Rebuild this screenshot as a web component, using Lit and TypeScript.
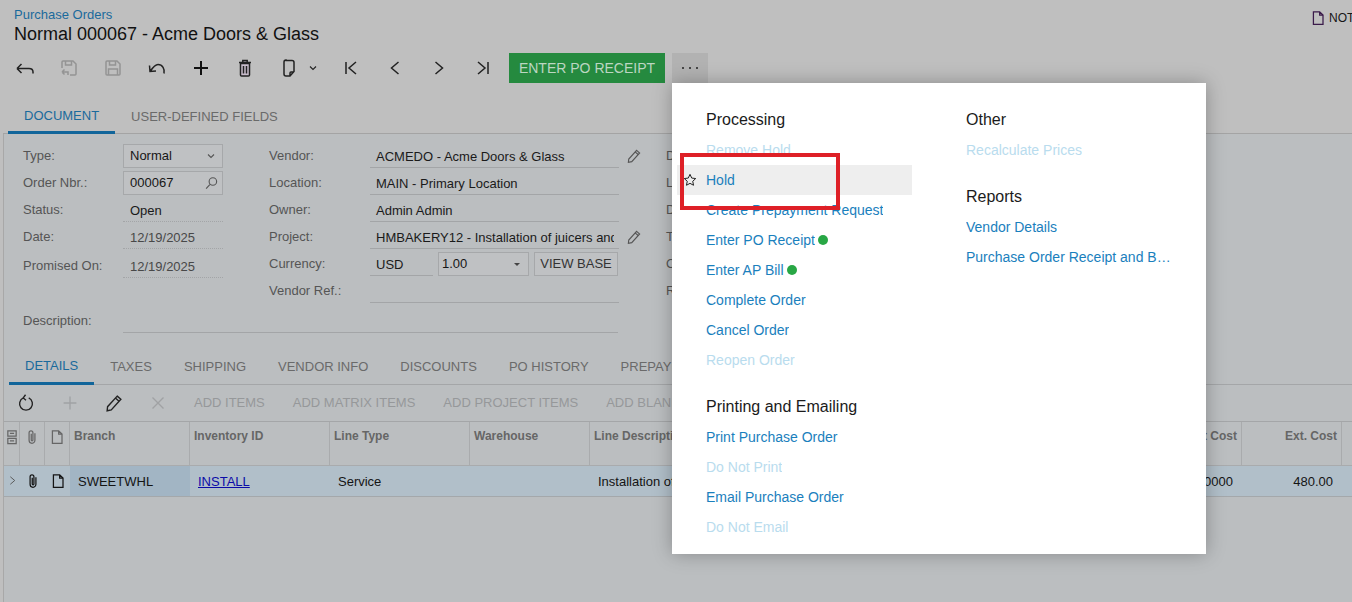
import { LitElement, html, css } from "lit";
import { customElement } from "lit/decorators.js";

const I: Record<string, string> = {
  back: "M4 12.5h12c2.5 0 4 1.5 4 3.5v1.5M4 12.5l4.5-4.5M4 12.5l4.5 4.5",
  saveBack: "M5 12V6a1 1 0 0 1 1-1h10l3 3v10a1 1 0 0 1-1 1h-5M8.5 5v4h6V5M5 16h6v3M5 16l2.5-2.5M5 16l2.5 2.5",
  save: "M5 6a1 1 0 0 1 1-1h10l3 3v10a1 1 0 0 1-1 1H6a1 1 0 0 1-1-1zM8.5 5v4h6V5M7.5 19v-6h9v6",
  undo: "M19 17.5c1-4.5-1.5-9-6-9-2.5 0-4.5 2-7.5 6.5M4.5 9.5l.5 6 6-.5",
  plus: "M5 12h14M12 5v14",
  trash: "M7.5 7.5h9v11.500a1 1 0 0 1-1 1h-7a1 1 0 0 1-1-1zM6 6.500h12M9.800 6.500V4.500h4.400v2M10.500 10v7.500M13.500 10v7.500",
  copy: "M9 4.500h6a2 2 0 0 1 2 2v9l-4 4.500H9a2 2 0 0 1-2-2v-12a2 2 0 0 1 2-2zM13 20v-3a1 1 0 0 1 1-1h3",
  chevD: "M8 10l4 4 4-4",
  first: "M7 6v12M17 6l-7 6 7 6",
  prev: "M15.500 6l-7 6 7 6",
  next: "M8.500 6l7 6-7 6",
  last: "M7 6l7 6-7 6M17 6v12",
  refresh: "M9 6.500a7 7 0 1 0 6 0M11.500 3l-2.500 3.500 3 2.500",
  x: "M6 6l12 12M18 6L6 18",
  pencil: "M15.500 4.500l4 3.500L9 19.500l-4.500 1 .5-4.500zM13.500 6.500l4 3.500",
  search: "M14.500 5a5 5 0 1 1 0 10 5 5 0 0 1 0-10zM11 13.500L5.500 19.500",
  clip: "M15.500 7.500v8.500a3.500 3.500 0 0 1-7 0V7a2.300 2.300 0 0 1 4.600 0v8.500a1 1 0 0 1-2 0V8",
  page: "M6.500 4.500h7.500l4 4v11H6.500zM14 4.500v4h4",
  files: "M7 4.500h10v6.500H7zM7 13.500h10v6.500H7zM9.500 7.700h5M9.500 16.700h5M7 11h10",
  star: "M12 3.500l2.600 5.600 6 .7-4.500 4.100 1.200 6L12 17l-5.300 2.900 1.200-6-4.500-4.100 6-.7z",
};

const icon = (name: string, cls = "") =>
  html`<svg class="ic ${cls}" viewBox="0 0 24 24" aria-hidden="true"><path d=${I[name]}></path></svg>`;

@customElement("app-root")
export class AppRoot extends LitElement {
  static styles = css`
    :host { display: block; position: relative; width: 1352px; height: 602px; overflow: hidden; background: #bfbfbf; color: #161616; font: 13px/16px "Liberation Sans", Arial, sans-serif; }
    * { box-sizing: border-box; }
    .ic { width: 24px; height: 24px; fill: none; stroke: currentColor; stroke-width: 1.5; display: block; flex: none; }

    .top { display: flex; padding-top: 7px; height: 46px; }
    .crumbs { width: 1312px; padding-left: 14px; flex: none; }
    .crumb { color: #1a6a9c; font-size: 13px; line-height: 16px; }
    .title { font-size: 18px; line-height: 23px; color: #111; }
    .notes { display: flex; align-items: center; gap: 1px; font-size: 12px; height: 16px; margin-top: 3px; white-space: nowrap; }
    .notes .ic { width: 20px; height: 20px; margin-left: -4px; color: #3a1a4a; }

    .bar { display: flex; align-items: center; height: 30px; margin-top: 7px; padding-left: 3px; }
    .tb { width: 44px; height: 30px; display: flex; align-items: center; justify-content: center; color: #222; flex: none; }
    .tb.off { color: #949494; }
    .tb.wide { width: 62px; justify-content: flex-start; padding-left: 10px; }
    .tb.wide .ic:last-child { width: 18px; height: 18px; margin-left: 3px; }
    .tb.bold .ic { stroke-width: 2; color: #111; }
    .tb.trash .ic path { fill: #c8bccb; }
    .go { margin-left: 4px; width: 156px; height: 30px; background: #258a3f; color: #bcd6c2; display: flex; align-items: center; justify-content: center; font-size: 14px; flex: none; }
    .more { margin-left: 7px; width: 36px; height: 30px; background: #b2b2b2; display: flex; align-items: center; justify-content: center; gap: 5px; flex: none; }
    .more i { width: 2px; height: 2px; background: #222; border-radius: 50%; }

    .tabs { display: flex; margin-top: 17px; height: 34px; margin-left: 3px; padding-left: 5px; border-bottom: 1px solid #a4a4a4; }
    .tabs .tab { padding-top: 7px; }
    .tab { padding: 6px 16px 0; font-size: 13px; line-height: 20px; color: #6a6a6a; white-space: nowrap; }
    .tabs .tab.on { color: #1a6a9c; border-bottom: 3px solid #11659a; height: 34px; padding-top: 6px; }

    .body { margin-left: 3px; border-left: 1px solid #a8a8a8; background: #bbbec0; }
    .form { display: flex; height: 216px; padding-top: 10px; padding-left: 19px; }
    .lab { color: #555; width: 100px; flex: none; }
    .r { display: flex; align-items: center; height: 24px; margin-bottom: 3px; white-space: nowrap; }
    .c1 { width: 246px; flex: none; }
    .c2 { width: 397px; flex: none; }
    .c3 { flex: none; }
    .c2 .lab { width: 101px; }
    .c2 .val { width: 249px; }
    .val { height: 24px; display: flex; align-items: center; padding-left: 6px; border-bottom: 1px solid #a3a5a7; overflow: hidden; white-space: nowrap; color: #1a1a1a; padding-top: 2px; }
    .c1 .val { width: 100px; padding-left: 7px; }
    .val.dotted { border-bottom: 1px dotted #a3a5a7; }
    .val.date { color: #484848; }
    .cut { display: block; width: 238px; overflow: hidden; }
    .box { height: 24px; border: 1px solid #a6a8aa; display: flex; align-items: center; justify-content: space-between; padding: 0 2px 0 6px; background: #bfc1c3; flex: none; }
    .c1 .box { width: 100px; }
    .box .ic { width: 18px; height: 18px; color: #555; }
    .promised { margin-top: 5px; }
    .pen { width: 18px; height: 18px; color: #555; margin-left: 6px; }
    .c2 .usd.val { width: 63px; }
    .rate { width: 91px; margin-left: 5px; padding: 0 6px 0 3px; }
    .caret { width: 0; height: 0; border-left: 3px solid transparent; border-right: 3px solid transparent; border-top: 3px solid #444; margin-right: 2px; }
    .vb { width: 84px; margin-left: 5px; justify-content: center; padding: 0; color: #333; }
    .descr { display: flex; align-items: center; height: 24px; margin-top: 3px; }
    .descr .lab { width: 100px; }
    .descr .val { width: 495px; }
    .col-wrap { display: flex; }
    .left { width: 643px; flex: none; }

    .tabs2 { display: flex; height: 35px; margin-left: 5px; border-bottom: 1px solid #a4a6a8; }
    .tabs2 .tab { padding-top: 7px; }
    .tabs2 .tab.on { color: #1a6a9c; border-bottom: 3px solid #11659a; height: 35px; padding-top: 6px; }

    .gbar { display: flex; align-items: center; height: 37px; border-bottom: 1px solid #a4a6a8; padding-bottom: 1px; }
    .gbar .tb .ic { width: 22px; height: 22px; }
    .gbar .tb.off { color: #a0a2a4; }
    .gtxt { padding: 0 14px; color: #96989a; font-size: 13px; white-space: nowrap; }

    .row { display: flex; white-space: nowrap; }
    .row.head { height: 44px; border-bottom: 1px solid #a9abad; color: #666; font: bold 12px/16px "Liberation Sans", sans-serif; }
    .row.data { height: 31px; background: #b1bfc9; border-bottom: 1px solid #a4a8ab; color: #141414; }
    .cell { flex: none; padding: 6px 4px 0; border-right: 1px solid #a9abad; overflow: hidden; }
    .data .cell { border-right: none; padding: 8px 8px 0; }
    .row .k0, .row .k1, .row .k2 { padding: 0; display: flex; align-items: flex-start; justify-content: center; }
    .k0 { width: 16px; }
    .k1, .k2 { width: 25px; }
    .cell .ic { width: 20px; height: 20px; margin-top: 5px; flex: none; }
    .head .k0 .ic, .head .k1 .ic { color: #666; }
    .data .k0 .ic { width: 15px; height: 15px; margin-top: 7px; color: #555; }
    .k3 { width: 120px; }
    .k4 { width: 140px; }
    .k5 { width: 140px; }
    .k6 { width: 120px; }
    .k7 { width: 552px; }
    .k8, .k9 { width: 100px; text-align: right; }
    .data .k3 { background: #a2b5c4; }
    .data .k8, .data .k9 { padding-right: 9px; }
    a { color: #0b0ba8; text-decoration: underline; }
    .spacer { height: 106px; }

    .menu { position: absolute; left: 672px; top: 83px; width: 534px; height: 471px; background: #fff; box-shadow: 0 0 18px rgba(0, 0, 0, 0.28); padding: 20px 34px 0 5px; display: grid; grid-template-columns: 235px 235px; column-gap: 25px; font-size: 14px; line-height: 30px; }
    .mh { height: 32px; font-size: 16px; line-height: 34px; color: #1b1b1b; padding-left: 29px; }
    .mh.next { margin-top: 15px; }
    .mi { height: 30px; padding-left: 29px; color: #1a80bd; display: flex; align-items: center; gap: 3px; white-space: nowrap; position: relative; }
    .mi.off { color: #b9dcee; }
    .mi.on { background: #eeeeee; }
    .mi .star { position: absolute; left: 5px; top: 7px; width: 16px; height: 16px; color: #222; }
    .mi .txt { overflow: hidden; text-overflow: ellipsis; }
    .dot { width: 10px; height: 10px; border-radius: 50%; background: #28a745; flex: none; }
    .mark { position: absolute; left: 680px; top: 153px; width: 160px; height: 57px; border: 4px solid #de2027; }
  `;

  private mi(t: string, opts: { off?: boolean; on?: boolean; dot?: boolean } = {}) {
    return html`<div class="mi ${opts.off ? "off" : ""} ${opts.on ? "on" : ""}">
      ${opts.on ? icon("star", "star") : ""}<span class="txt">${t}</span>${opts.dot ? html`<span class="dot"></span>` : ""}
    </div>`;
  }

  render() {
    return html`
      <div class="top">
        <div class="crumbs">
          <div class="crumb">Purchase Orders</div>
          <div class="title">Normal 000067 - Acme Doors &amp; Glass</div>
        </div>
        <div class="notes">${icon("page")}<span>NOTES</span></div>
      </div>

      <div class="bar">
        <div class="tb">${icon("back")}</div>
        <div class="tb off">${icon("saveBack")}</div>
        <div class="tb off">${icon("save")}</div>
        <div class="tb">${icon("undo")}</div>
        <div class="tb bold">${icon("plus")}</div>
        <div class="tb trash">${icon("trash")}</div>
        <div class="tb wide">${icon("copy")}${icon("chevD")}</div>
        <div class="tb">${icon("first")}</div>
        <div class="tb">${icon("prev")}</div>
        <div class="tb">${icon("next")}</div>
        <div class="tb">${icon("last")}</div>
        <div class="go">ENTER PO RECEIPT</div>
        <div class="more"><i></i><i></i><i></i></div>
      </div>

      <div class="tabs">
        <div class="tab on">DOCUMENT</div>
        <div class="tab">USER-DEFINED FIELDS</div>
      </div>

      <div class="body">
        <div class="form">
          <div class="left">
            <div class="col-wrap">
              <div class="c1">
                <div class="r"><span class="lab">Type:</span><div class="box">Normal ${icon("chevD")}</div></div>
                <div class="r"><span class="lab">Order Nbr.:</span><div class="box">000067 ${icon("search")}</div></div>
                <div class="r"><span class="lab">Status:</span><div class="val dotted">Open</div></div>
                <div class="r"><span class="lab">Date:</span><div class="val dotted date">12/19/2025</div></div>
                <div class="r promised"><span class="lab">Promised On:</span><div class="val dotted date">12/19/2025</div></div>
              </div>
              <div class="c2">
                <div class="r"><span class="lab">Vendor:</span><div class="val">ACMEDO - Acme Doors &amp; Glass</div>${icon("pencil", "pen")}</div>
                <div class="r"><span class="lab">Location:</span><div class="val">MAIN - Primary Location</div></div>
                <div class="r"><span class="lab">Owner:</span><div class="val">Admin Admin</div></div>
                <div class="r"><span class="lab">Project:</span><div class="val"><span class="cut">HMBAKERY12 - Installation of juicers and</span></div>${icon("pencil", "pen")}</div>
                <div class="r"><span class="lab">Currency:</span><div class="val usd">USD</div><div class="box rate">1.00<span class="caret"></span></div><div class="box vb">VIEW BASE</div></div>
                <div class="r"><span class="lab">Vendor Ref.:</span><div class="val"></div></div>
              </div>
            </div>
            <div class="descr"><span class="lab">Description:</span><div class="val"></div></div>
          </div>
          <div class="c3">
            <div class="r"><span class="lab">Detail Total:</span></div>
            <div class="r"><span class="lab">Line Total:</span></div>
            <div class="r"><span class="lab">Discount Total:</span></div>
            <div class="r"><span class="lab">Tax Total:</span></div>
            <div class="r"><span class="lab">Order Total:</span></div>
            <div class="r"><span class="lab">Retention:</span></div>
          </div>
        </div>

        <div class="tabs2">
          <div class="tab on">DETAILS</div>
          <div class="tab">TAXES</div>
          <div class="tab">SHIPPING</div>
          <div class="tab">VENDOR INFO</div>
          <div class="tab">DISCOUNTS</div>
          <div class="tab">PO HISTORY</div>
          <div class="tab">PREPAYMENTS</div>
        </div>

        <div class="gbar">
          <div class="tb">${icon("refresh")}</div>
          <div class="tb off">${icon("plus")}</div>
          <div class="tb">${icon("pencil")}</div>
          <div class="tb off">${icon("x")}</div>
          <span class="gtxt">ADD ITEMS</span>
          <span class="gtxt">ADD MATRIX ITEMS</span>
          <span class="gtxt">ADD PROJECT ITEMS</span>
          <span class="gtxt">ADD BLANKET PO LINE</span>
        </div>

        <div class="row head">
          <div class="cell k0">${icon("files")}</div>
          <div class="cell k1">${icon("clip")}</div>
          <div class="cell k2">${icon("page")}</div>
          <div class="cell k3">Branch</div>
          <div class="cell k4">Inventory ID</div>
          <div class="cell k5">Line Type</div>
          <div class="cell k6">Warehouse</div>
          <div class="cell k7">Line Description</div>
          <div class="cell k8">Unit Cost</div>
          <div class="cell k9">Ext. Cost</div>
        </div>
        <div class="row data">
          <div class="cell k0">${icon("next")}</div>
          <div class="cell k1">${icon("clip")}</div>
          <div class="cell k2">${icon("page")}</div>
          <div class="cell k3">SWEETWHL</div>
          <div class="cell k4"><a>INSTALL</a></div>
          <div class="cell k5">Service</div>
          <div class="cell k6"></div>
          <div class="cell k7">Installation of juicers</div>
          <div class="cell k8">240.0000</div>
          <div class="cell k9">480.00</div>
        </div>
        <div class="spacer"></div>
      </div>

      <div class="menu">
        <div>
          <div class="mh">Processing</div>
          ${this.mi("Remove Hold", { off: true })}
          ${this.mi("Hold", { on: true })}
          ${this.mi("Create Prepayment Request")}
          ${this.mi("Enter PO Receipt", { dot: true })}
          ${this.mi("Enter AP Bill", { dot: true })}
          ${this.mi("Complete Order")}
          ${this.mi("Cancel Order")}
          ${this.mi("Reopen Order", { off: true })}
          <div class="mh next">Printing and Emailing</div>
          ${this.mi("Print Purchase Order")}
          ${this.mi("Do Not Print", { off: true })}
          ${this.mi("Email Purchase Order")}
          ${this.mi("Do Not Email", { off: true })}
        </div>
        <div>
          <div class="mh">Other</div>
          ${this.mi("Recalculate Prices", { off: true })}
          <div class="mh next">Reports</div>
          ${this.mi("Vendor Details")}
          ${this.mi("Purchase Order Receipt and Bill History")}
        </div>
      </div>
      <div class="mark"></div>
    `;
  }
}
